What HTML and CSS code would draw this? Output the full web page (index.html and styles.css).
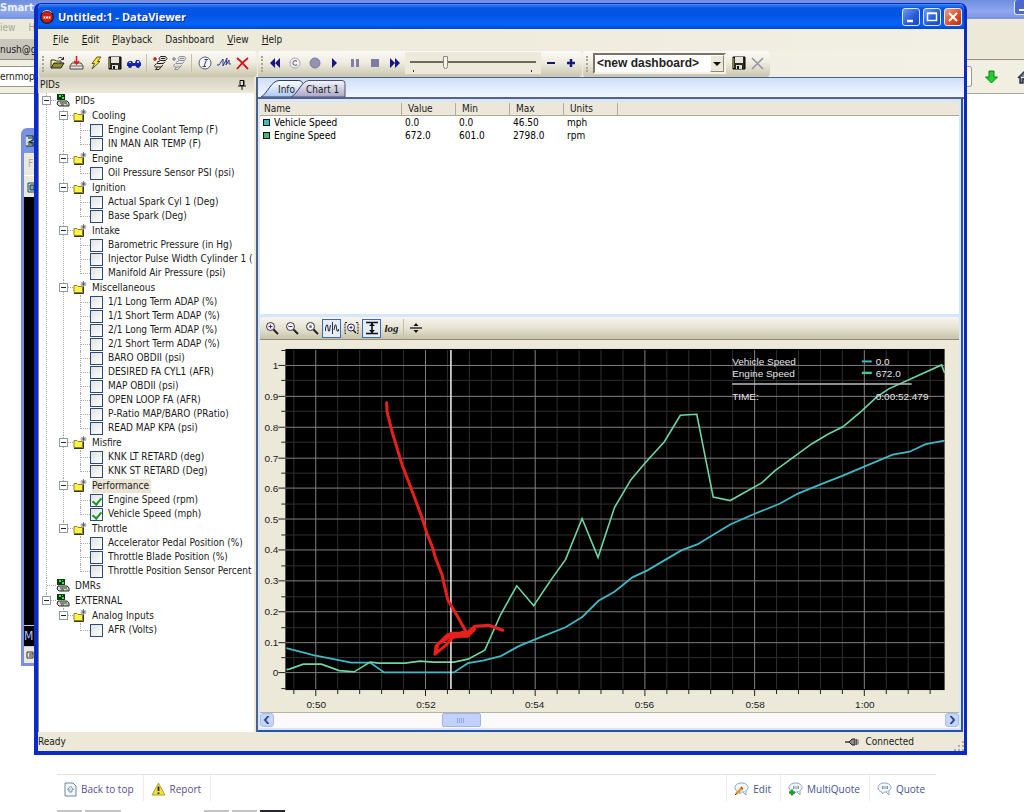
FILE: index.html
```html
<!DOCTYPE html>
<html lang="en">
<head>
<meta charset="utf-8">
<title>Untitled:1 - DataViewer</title>
<link rel="stylesheet" href="styles.css">
</head>
<body>
<svg class="defs" aria-hidden="true">
  <symbol id="i-device" viewBox="0 0 14 13"><path d="M1 0h8v6H1z" fill="#0b3d12"/><path d="M3 1h2v2H3zM6 3h2v2H6zM6 1h1v1H6z" fill="#3fe05a"/><path d="M2 7h9l2 2v3H3L1 10z" fill="#d9d9cf" stroke="#222"/><path d="M4 9h7M5 11h3" stroke="#333"/><path d="M10 11h2" stroke="#1ca52e"/></symbol>
  <symbol id="i-folder" viewBox="0 0 14 13"><path d="M1 4.500h3l1 1h4.500v6H1z" fill="#fff04a" stroke="#8a8420"/><path d="M1 12.500h9.500V6" fill="none" stroke="#333"/><path d="M10.500 0v6M7.500 3h6M8.500 1l4 4M12.500 1l-4 4" stroke="#444" stroke-width=".7"/></symbol>
  <symbol id="i-save" viewBox="0 0 14 14"><path d="M1 1h12v12H1z" fill="#2b2b22" stroke="#000"/><path d="M3 1h8v6H3z" fill="#e6e6dc"/><path d="M1.500 2v10" stroke="#85853a"/><path d="M4 9h6v4H4z" fill="#ddd"/><path d="M5 10h2v3H5z" fill="#111"/></symbol>
  <symbol id="i-link" viewBox="0 0 16 16"><path d="M8.500 1.500h5l1.500 2-1.500 2h-5l-1.500-2zM8 5.500l-3 2M5 8.500h6.500l1.500-2M4.500 8.500l-2 2 1 1.500H9l2-2M5.500 12l-2 2.500H7L9 12" fill="#e4e1d0" stroke="currentColor"/><path d="M9 3.500h4" stroke="currentColor"/><path d="M1 4h4M3 2v4" stroke="var(--mark)" stroke-width="1.500"/></symbol>
  <symbol id="i-lens" viewBox="0 0 14 14"><circle cx="5.500" cy="5.500" r="4" fill="#f5f2fb" stroke="#333"/><path d="M8.500 8.500l4.500 4.500" stroke="#222" stroke-width="2"/></symbol>
  <symbol id="i-bubble" viewBox="0 0 15 14"><path d="M7.500 1C3.500 1 1 3 1 5.500S3 10 5 10l.5 2 2-2c4 0 6.500-2 6.500-4.500S11.500 1 7.500 1z" fill="#f1f6fb" stroke="#8ca6c0"/><path d="M9 10l3 3v-4" fill="#f1f6fb" stroke="#8ca6c0"/></symbol>
</svg>

<div class="desktop">
  <div class="browser">
    <header class="br-title"><span>Smart</span><button class="br-min" aria-label="Minimize browser"></button></header>
    <div class="br-menu"><span>iew</span><span>H</span></div>
    <div class="br-tabs">nush@gr</div>
    <div class="br-nav">
      <div class="br-url">ernmopa</div>
      <button class="plain" aria-label="Downloads"><svg width="13" height="14" viewBox="0 0 13 14"><path d="M4 1h5v6h3.500L6.500 13 .5 7H4z" fill="#1fd12c" stroke="#137a1d"/></svg></button>
      <button class="plain" aria-label="Home"><svg width="14" height="14" viewBox="0 0 14 14"><path d="M1 8l6-6 6 6M3 7v6h3V9h2v4h3V7" fill="#7d8798" stroke="#2b3446" stroke-width="1.500"/></svg></button>
    </div>
    <main class="forum">
      <nav class="post-controls">
        <a href="#top"><svg width="13" height="15" viewBox="0 0 13 15"><path d="M1 1h8l3 3v10H1z" fill="#f4f8fb" stroke="#6d8796"/><path d="M6.500 4L3.500 7.500h1.500V10h3V7.500h1.500z" fill="#dce8ee" stroke="#6d8796" stroke-width=".8"/></svg>Back to top</a>
        <a href="#report"><svg width="15" height="14" viewBox="0 0 15 14"><path d="M7.500 1l6.500 12H1z" fill="#f3df3b" stroke="#b3a02a"/><path d="M7.500 4.500v4.500M7.500 10.500v1.500" stroke="#222" stroke-width="1.800"/></svg>Report</a>
        <a class="push" href="#edit"><svg width="15" height="14" viewBox="0 0 15 14"><use href="#i-bubble"/><path d="M2 12l6-6" stroke="#d9a02c" stroke-width="2.500"/><path d="M7.500 6.500l1-1" stroke="#c8343c" stroke-width="2.500"/><path d="M1 13l1.500-1.500" stroke="#222"/></svg>Edit</a>
        <a href="#multi"><svg width="15" height="14" viewBox="0 0 15 14"><use href="#i-bubble"/><path d="M5.500 4v3M7 4v3M9 4v3M10.500 4v3" stroke="#6a8298" stroke-width=".8"/><path d="M4 7.500v6M1 10.500h6" stroke="#1e9b2c" stroke-width="2.500"/></svg>MultiQuote</a>
        <a href="#quote"><svg width="15" height="14" viewBox="0 0 15 14"><use href="#i-bubble"/><path d="M5.500 4v3M7 4v3M9 4v3M10.500 4v3" stroke="#6a8298" stroke-width=".8"/></svg>Quote</a>
      </nav>
      <div class="thumbs"><i></i><i class="wide"></i><i class="after"></i><i></i><i class="dark"></i></div>
    </main>
  </div>

  <section class="back-window" aria-label="Background window">
    <div class="bw-title"><svg width="10" height="12" viewBox="0 0 10 12"><path d="M1 1h7v4l-4 2 4 1v3H1M3 3h4M3 9h4" fill="#cfe6d0" stroke="#123" stroke-width="1.200"/></svg></div>
    <div class="bw-menu">F</div>
    <div class="bw-tools"><svg width="10" height="12" viewBox="0 0 10 12"><path d="M1 2h8v9H1z" fill="#d8ecf4" stroke="#1b3d55"/><path d="M3 4h4v5H3z" fill="#7ab" stroke="#134"/></svg></div>
    <div class="bw-screen"></div>
    <div class="bw-mark">M</div>
    <div class="bw-foot"><svg width="10" height="10" viewBox="0 0 10 10"><path d="M2 2h6v6H2zM4 4h4M4 6h3" fill="none" stroke="#333"/></svg></div>
  </section>

  <section class="window" aria-label="DataViewer">
    <header class="titlebar">
      <svg width="14" height="14" viewBox="0 0 14 14"><circle cx="7" cy="7" r="6.200" fill="#c8201c" stroke="#2b1a22" stroke-width="1.400"/><path d="M2.500 2.500a6 6 0 0 1 9 0" stroke="#e8d8c8" fill="none"/><path d="M3 6h8v3H3z" fill="#f4604c"/><path d="M4 7.500h1M6 7.500h2M9 7.500h1" stroke="#fff" stroke-width="1.500"/></svg>
      <h1>Untitled:1 - DataViewer</h1>
      <button class="cap" aria-label="Minimize"><svg width="16" height="16" viewBox="0 0 16 16"><path d="M4 12h6" stroke="#fff" stroke-width="2.500"/></svg></button>
      <button class="cap" aria-label="Maximize"><svg width="16" height="16" viewBox="0 0 16 16"><path d="M3.500 4.500h9v7h-9zM3 4h10" fill="none" stroke="#fff" stroke-width="1.500"/></svg></button>
      <button class="cap close" aria-label="Close"><svg width="16" height="16" viewBox="0 0 16 16"><path d="M4 4l8 8M12 4l-8 8" stroke="#fff" stroke-width="2"/></svg></button>
    </header>

    <nav class="menubar">
      <button><u>F</u>ile</button><button><u>E</u>dit</button><button><u>P</u>layback</button><button>Dashboard</button><button><u>V</u>iew</button><button><u>H</u>elp</button>
    </nav>

    <div class="toolbars">
      <div class="toolbar main-tools">
        <button aria-label="Open"><svg width="15" height="14" viewBox="0 0 15 14"><path d="M1 12V4h4l1 1h5v3" fill="#f2ef9c" stroke="#333"/><path d="M1 12l3-5h10l-3 5z" fill="#8f8c34" stroke="#222"/><path d="M8 2.500c2-2 4-1 5 .5M13.500 1v2.500H11" fill="none" stroke="#222"/></svg></button>
        <button aria-label="Download"><svg width="15" height="14" viewBox="0 0 15 14"><path d="M3 7h9l2 3v3H1v-3z" fill="#eceae0" stroke="#444"/><path d="M1 10h13" stroke="#666"/><path d="M7.500 0v7M5 5l2.500 3L10 5" fill="none" stroke="#d4201e" stroke-width="1.600"/></svg></button>
        <button aria-label="Connect"><svg width="12" height="14" viewBox="0 0 12 14"><path d="M7 1h4L7.500 5.500H10L2 13l2.500-5.500H2z" fill="#f7e52e" stroke="#4d4a18" stroke-width=".9"/></svg></button>
        <button aria-label="Save"><svg width="14" height="14"><use href="#i-save"/></svg></button>
        <button aria-label="Vehicle"><svg width="16" height="14" viewBox="0 0 16 14"><path d="M1 7l2-2h3l1 2h2l1-3h3l2 3v3H1z" fill="#1828b0"/><circle cx="4" cy="10" r="2" fill="#1020a0"/><circle cx="12" cy="10" r="2" fill="#1020a0"/><path d="M11 5h2v2h-2zM3 6h2v1H3z" fill="#c8d4f8"/></svg></button>
        <hr>
        <button class="live" aria-label="Start logging"><svg width="16" height="16"><use href="#i-link"/></svg></button>
        <button class="idle" aria-label="Stop logging"><svg width="16" height="16"><use href="#i-link"/></svg></button>
        <hr>
        <button aria-label="Information"><svg width="14" height="14" viewBox="0 0 14 14"><circle cx="7" cy="7" r="6" fill="#f6f5ee" stroke="#555b7c"/><path d="M8.500 3.500L6 10.500M6.500 3.500h3.500M4.500 10.500H8" stroke="#3b4080"/></svg></button>
        <button aria-label="Signal"><svg width="14" height="14" viewBox="0 0 14 14"><path d="M0 9h2l4-6v7l4-8-1 7 3-5v4h2" fill="none" stroke="#2d3590"/></svg></button>
        <button aria-label="Delete"><svg width="13" height="13" viewBox="0 0 13 13"><path d="M1 1c4 3 7 7 11 11M12 1C8 4 4 8 1 12" stroke="#d0181c" stroke-width="1.900"/></svg></button>
      </div>
      <div class="toolbar play-tools">
        <button aria-label="Rewind"><svg width="12" height="12" viewBox="0 0 12 12"><path d="M6 1v10L1 6zM11 1v10L6 6z" fill="#171780"/></svg></button>
        <button aria-label="Continuous"><svg width="12" height="12" viewBox="0 0 12 12"><circle cx="6" cy="6" r="5" fill="#f4f3ec" stroke="#a5a5b8"/><path d="M8 4.500a2.300 2.300 0 1 0 0 3" fill="none" stroke="#74749c" stroke-width="1.200"/></svg></button>
        <button aria-label="Record"><svg width="12" height="12" viewBox="0 0 12 12"><circle cx="6" cy="6" r="5" fill="#9292b4" stroke="#7d7d9c"/></svg></button>
        <button aria-label="Play"><svg width="12" height="12" viewBox="0 0 12 12"><path d="M3 1v10l5-5z" fill="#171780"/></svg></button>
        <button aria-label="Pause"><svg width="12" height="12" viewBox="0 0 12 12"><path d="M2 2h3v8H2zM7 2h3v8H7z" fill="#8080a8"/></svg></button>
        <button aria-label="Stop"><svg width="12" height="12" viewBox="0 0 12 12"><path d="M2 2h8v8H2z" fill="#7c7ca4"/></svg></button>
        <button aria-label="Fast forward"><svg width="12" height="12" viewBox="0 0 12 12"><path d="M1 1v10l5-5zM6 1v10l5-5z" fill="#171780"/></svg></button>
        <div class="speed"><input type="range" min="0" max="100" value="27" aria-label="Playback speed"></div>
        <button aria-label="Slower"><svg width="12" height="12" viewBox="0 0 12 12"><path d="M2 6h8" stroke="#171760" stroke-width="2.200"/></svg></button>
        <button aria-label="Faster"><svg width="12" height="12" viewBox="0 0 12 12"><path d="M2 6h8M6 2v8" stroke="#171780" stroke-width="2.500"/></svg></button>
      </div>
      <div class="toolbar dash-tools">
        <div class="combo"><select aria-label="Dashboard"><option>&lt;new dashboard&gt;</option></select><span></span></div>
        <button aria-label="Save dashboard"><svg width="14" height="14"><use href="#i-save"/></svg></button>
        <button aria-label="Delete dashboard"><svg width="13" height="13" viewBox="0 0 13 13"><path d="M1 1l11 11M12 1L1 12" stroke="#8f93a6" stroke-width="1.500"/></svg></button>
      </div>
    </div>

    <div class="work">
      <aside class="sidebar">
        <div class="side-head"><h2>PIDs</h2><button class="plain" aria-label="Pin"><svg width="8" height="10" viewBox="0 0 8 10"><path d="M2 .5h4v5H2zM0 6h8M4 6v4M5.500 1v4" fill="none" stroke="#111"/></svg></button></div>
        <ul class="tree">
          <li><div class="row head"><button class="exp" aria-label="Collapse PIDs"></button><svg width="14" height="13"><use href="#i-device"/></svg><span>PIDs</span></div>
            <ul>
              <li><div class="row head"><button class="exp" aria-label="Collapse Cooling"></button><svg width="14" height="13"><use href="#i-folder"/></svg><span>Cooling</span></div>
                <ul>
                  <li><label class="row"><input type="checkbox"><span>Engine Coolant Temp (F)</span></label></li>
                  <li><label class="row"><input type="checkbox"><span>IN MAN AIR TEMP (F)</span></label></li>
                </ul></li>
              <li><div class="row head"><button class="exp" aria-label="Collapse Engine"></button><svg width="14" height="13"><use href="#i-folder"/></svg><span>Engine</span></div>
                <ul>
                  <li><label class="row"><input type="checkbox"><span>Oil Pressure Sensor PSI (psi)</span></label></li>
                </ul></li>
              <li><div class="row head"><button class="exp" aria-label="Collapse Ignition"></button><svg width="14" height="13"><use href="#i-folder"/></svg><span>Ignition</span></div>
                <ul>
                  <li><label class="row"><input type="checkbox"><span>Actual Spark Cyl 1 (Deg)</span></label></li>
                  <li><label class="row"><input type="checkbox"><span>Base Spark (Deg)</span></label></li>
                </ul></li>
              <li><div class="row head"><button class="exp" aria-label="Collapse Intake"></button><svg width="14" height="13"><use href="#i-folder"/></svg><span>Intake</span></div>
                <ul>
                  <li><label class="row"><input type="checkbox"><span>Barometric Pressure (in Hg)</span></label></li>
                  <li><label class="row"><input type="checkbox"><span>Injector Pulse Width Cylinder 1 (</span></label></li>
                  <li><label class="row"><input type="checkbox"><span>Manifold Air Pressure (psi)</span></label></li>
                </ul></li>
              <li><div class="row head"><button class="exp" aria-label="Collapse Miscellaneous"></button><svg width="14" height="13"><use href="#i-folder"/></svg><span>Miscellaneous</span></div>
                <ul>
                  <li><label class="row"><input type="checkbox"><span>1/1 Long Term ADAP (%)</span></label></li>
                  <li><label class="row"><input type="checkbox"><span>1/1 Short Term ADAP (%)</span></label></li>
                  <li><label class="row"><input type="checkbox"><span>2/1 Long Term ADAP (%)</span></label></li>
                  <li><label class="row"><input type="checkbox"><span>2/1 Short Term ADAP (%)</span></label></li>
                  <li><label class="row"><input type="checkbox"><span>BARO OBDII (psi)</span></label></li>
                  <li><label class="row"><input type="checkbox"><span>DESIRED FA CYL1 (AFR)</span></label></li>
                  <li><label class="row"><input type="checkbox"><span>MAP OBDII (psi)</span></label></li>
                  <li><label class="row"><input type="checkbox"><span>OPEN LOOP FA (AFR)</span></label></li>
                  <li><label class="row"><input type="checkbox"><span>P-Ratio MAP/BARO (PRatio)</span></label></li>
                  <li><label class="row"><input type="checkbox"><span>READ MAP KPA (psi)</span></label></li>
                </ul></li>
              <li><div class="row head"><button class="exp" aria-label="Collapse Misfire"></button><svg width="14" height="13"><use href="#i-folder"/></svg><span>Misfire</span></div>
                <ul>
                  <li><label class="row"><input type="checkbox"><span>KNK LT RETARD (deg)</span></label></li>
                  <li><label class="row"><input type="checkbox"><span>KNK ST RETARD (Deg)</span></label></li>
                </ul></li>
              <li><div class="row head"><button class="exp" aria-label="Collapse Performance"></button><svg width="14" height="13"><use href="#i-folder"/></svg><span class="selected">Performance</span></div>
                <ul>
                  <li><label class="row"><input type="checkbox" checked><span>Engine Speed (rpm)</span></label></li>
                  <li><label class="row"><input type="checkbox" checked><span>Vehicle Speed (mph)</span></label></li>
                </ul></li>
              <li><div class="row head"><button class="exp" aria-label="Collapse Throttle"></button><svg width="14" height="13"><use href="#i-folder"/></svg><span>Throttle</span></div>
                <ul>
                  <li><label class="row"><input type="checkbox"><span>Accelerator Pedal Position (%)</span></label></li>
                  <li><label class="row"><input type="checkbox"><span>Throttle Blade Position (%)</span></label></li>
                  <li><label class="row"><input type="checkbox"><span>Throttle Position Sensor Percent</span></label></li>
                </ul></li>
            </ul></li>
          <li><div class="row head none"><svg width="14" height="13"><use href="#i-device"/></svg><span>DMRs</span></div></li>
          <li><div class="row head"><button class="exp" aria-label="Collapse EXTERNAL"></button><svg width="14" height="13"><use href="#i-device"/></svg><span>EXTERNAL</span></div>
            <ul>
              <li><div class="row head"><button class="exp" aria-label="Collapse Analog Inputs"></button><svg width="14" height="13"><use href="#i-folder"/></svg><span>Analog Inputs</span></div>
                <ul>
                  <li><label class="row"><input type="checkbox"><span>AFR (Volts)</span></label></li>
                </ul></li>
            </ul></li>
        </ul>
      </aside>

      <section class="document">
        <div class="tabs">
          <svg width="90" height="19" viewBox="0 0 90 19" aria-hidden="true">
            <defs><linearGradient id="g1" x2="0" y2="1"><stop stop-color="#fff"/><stop offset="1" stop-color="#a9c8f2"/></linearGradient><linearGradient id="g2" x2="0" y2="1"><stop stop-color="#f6f5fc"/><stop offset="1" stop-color="#aaa6c6"/></linearGradient></defs>
            <path d="M2 19C8 16 12 3 20 2.500h20q3 0 4 3L34 19z" fill="url(#g1)" stroke="#2b3f6b"/>
            <path d="M32 19C40 15 42 3 50 2.500h33q3 0 3 3V19z" fill="url(#g2)" stroke="#4b4f74"/>
          </svg>
          <button>Info</button><button>Chart 1</button>
        </div>
        <div class="panel">
          <div class="list">
            <table>
              <colgroup><col class="c-name"><col class="c-num"><col class="c-num"><col class="c-num"><col class="c-num"><col></colgroup>
              <thead><tr><th>Name</th><th>Value</th><th>Min</th><th>Max</th><th>Units</th><th></th></tr></thead>
              <tbody>
                <tr><td><i class="key blue"></i>Vehicle Speed</td><td>0.0</td><td>0.0</td><td>46.50</td><td>mph</td><td></td></tr>
                <tr><td><i class="key green"></i>Engine Speed</td><td>672.0</td><td>601.0</td><td>2798.0</td><td>rpm</td><td></td></tr>
              </tbody>
            </table>
          </div>
          <div class="chart-tools">
            <button aria-label="Zoom in"><svg width="14" height="14" viewBox="0 0 14 14"><use href="#i-lens"/><path d="M3.500 5.500h4M5.500 3.500v4" stroke="#5a1c8c"/></svg></button>
            <button aria-label="Zoom out"><svg width="14" height="14" viewBox="0 0 14 14"><use href="#i-lens"/><path d="M3.500 5.500h4" stroke="#5a1c8c"/></svg></button>
            <button aria-label="Zoom reset"><svg width="14" height="14" viewBox="0 0 14 14"><use href="#i-lens"/><circle cx="5.500" cy="5.500" r="1.500" fill="#777"/></svg></button>
            <button class="on" aria-label="Cursor"><svg width="14" height="14" viewBox="0 0 14 14"><path d="M.5 10V7l1-3h1l1 6h1l1-6M7.500 1v12M9 9l1-5h1l1 6h1.500V8" fill="none" stroke="#2a3048"/></svg></button>
            <button aria-label="Zoom window"><svg width="15" height="14" viewBox="0 0 15 14"><path d="M3 1.500H1v11h2M12 1.500h2v11h-2" fill="none" stroke="#222" stroke-dasharray="2 1"/><circle cx="7" cy="6.500" r="3.500" fill="#fff" stroke="#2c2360"/><path d="M5.500 6.500h3M7 5v3" stroke="#5a1c8c"/><path d="M9 9l3 3" stroke="#222" stroke-width="1.500"/></svg></button>
            <button class="on" aria-label="Auto scale"><svg width="14" height="14" viewBox="0 0 14 14"><path d="M1 1.500h12M1 12.500h12M7 2v10" stroke="#111" stroke-width="1.600"/><path d="M4 5l3-3 3 3zM4 9l3 3 3-3z" fill="#111"/></svg></button>
            <button class="log">log</button>
            <hr>
            <button aria-label="Split"><svg width="12" height="12" viewBox="0 0 12 12"><path d="M0 6h12" stroke="#111" stroke-width="1.300"/><path d="M3.500 4L6 1l2.500 3zM3.500 8L6 11l2.500-3z" fill="#111"/></svg></button>
          </div>
          <div class="chart">
            <svg viewBox="260 340 698 373" role="img" aria-label="Vehicle speed and engine speed over time">
              <rect x="284" y="349" width="661" height="342" fill="#000"/>
              <g fill="none">
                <path stroke="#303030" d="M292.500 350v340M336.500 350v340M358.500 350v340M380.500 350v340M402.500 350v340M446.500 350v340M468.500 350v340M490.500 350v340M512.500 350v340M556.500 350v340M578.500 350v340M600.500 350v340M622.500 350v340M666.500 350v340M688.500 350v340M710.500 350v340M732.500 350v340M776.500 350v340M798.500 350v340M820.500 350v340M842.500 350v340M886.500 350v340M908.500 350v340M930.500 350v340M284 380.500h661M284 411.500h661M284 442.500h661M284 473.500h661M284 504.500h661M284 535.500h661M284 566.500h661M284 597.500h661M284 628.500h661M284 658.500h661"/>
                <path stroke="#828282" d="M314.500 350v340M424.500 350v340M534.500 350v340M644.500 350v340M754.500 350v340M864.500 350v340M284 365.500h661M284 396.500h661M284 427.500h661M284 458.500h661M284 488.500h661M284 519.500h661M284 550.500h661M284 581.500h661M284 612.500h661M284 643.500h661M284 673.500h661"/>
                <path stroke="#222" d="M277 365.500h7M277 396.500h7M277 427.500h7M277 458.500h7M277 488.500h7M277 519.500h7M277 550.500h7M277 581.500h7M277 612.500h7M277 643.500h7M277 673.500h7M280 350.500h4M280 380.500h4M280 411.500h4M280 442.500h4M280 473.500h4M280 504.500h4M280 535.500h4M280 566.500h4M280 597.500h4M280 628.500h4M280 658.500h4M280 689.500h4M314.500 691v6M424.500 691v6M534.500 691v6M644.500 691v6M754.500 691v6M864.500 691v6M292.500 691v4M336.500 691v4M358.500 691v4M380.500 691v4M402.500 691v4M446.500 691v4M468.500 691v4M490.500 691v4M512.500 691v4M556.500 691v4M578.500 691v4M600.500 691v4M622.500 691v4M666.500 691v4M688.500 691v4M710.500 691v4M732.500 691v4M776.500 691v4M798.500 691v4M820.500 691v4M842.500 691v4M886.500 691v4M908.500 691v4M930.500 691v4"/>
                <path stroke="#3fb9c4" stroke-width="1.800" d="M285 649L312 656L350 663.500H369L383 673.300H453L467 664L482 661.500L500 657L518 647L540 638L565 628L582 617.500L598 601.500L614 592.500L632 578L647 571L681 551L697 545L730 525L754 514.500L780 504L798 494L820 485L843 476L862 468L893 455L910 452L926 444.500L945 441"/>
                <path stroke="#6fd6a4" stroke-width="1.600" d="M285 670.500L288 670L302 665H320L338 671.500L353 672.700L369 663L378 664H404L419 662L432 663H453L467 660L484 651L500 615L516 586.500L533 606.500L550 581L565 560L581.500 519L597.500 558L614 508L630.500 480L644 464L664 442L680 415.500L696.500 414.500L713 497.500L730 501L762 483L775 471L812 444L828 434.500L843 427L862 411L877 397L889 389L942 365L945 373"/>
                <path stroke="#f2f2f2" stroke-width="1.500" d="M450 350V690"/>
                <path stroke="#bdbdbd" stroke-width="1.500" d="M732 384H912"/>
                <path stroke="#3fb9c4" stroke-width="2" d="M862 361.500h10"/>
                <path stroke="#4fc48e" stroke-width="2.500" d="M862 373h10"/>
                <path stroke="#e8201c" stroke-width="3" stroke-linecap="round" stroke-linejoin="round" d="M385.500 403L386 412L391 432L401 465L412 494L421 518L426 534L432 549L434 557L441 575L443 584L447 601L456 616L461 625L466 634M434 655L435 647L446 636L451 634L466 634L474 627L488 626L502 631M434 655L445 646L452 638L460 637L467 637L474 630M435 653L437 645L450 637L462 633"/>
              </g>
              <g class="legend"><text x="732" y="365">Vehicle Speed</text><text x="732" y="377">Engine Speed</text><text x="732" y="400">TIME:</text><text x="876" y="365">0.0</text><text x="876" y="377">672.0</text><text x="876" y="400">0:00:52.479</text></g>
              <g class="axis end"><text x="277" y="369">1</text><text x="277" y="400">0.9</text><text x="277" y="431">0.8</text><text x="277" y="462">0.7</text><text x="277" y="492">0.6</text><text x="277" y="523">0.5</text><text x="277" y="554">0.4</text><text x="277" y="585">0.3</text><text x="277" y="616">0.2</text><text x="277" y="647">0.1</text><text x="277" y="677">0</text></g>
              <g class="axis mid"><text x="315" y="709">0:50</text><text x="425" y="709">0:52</text><text x="534" y="709">0:54</text><text x="644" y="709">0:56</text><text x="755" y="709">0:58</text><text x="865" y="709">1:00</text></g>
            </svg>
          </div>
          <div class="scroll">
            <button aria-label="Scroll left"><svg width="8" height="8" viewBox="0 0 8 8"><path d="M5.500 0L2 4l3.500 4" fill="none" stroke="#1f3f86" stroke-width="1.800"/></svg></button>
            <div class="track"><div class="thumb"></div></div>
            <button aria-label="Scroll right"><svg width="8" height="8" viewBox="0 0 8 8"><path d="M2.500 0L6 4 2.500 8" fill="none" stroke="#1f3f86" stroke-width="1.800"/></svg></button>
          </div>
        </div>
      </section>
    </div>

    <footer class="status">
      <span>Ready</span>
      <span class="conn"><svg width="14" height="8" viewBox="0 0 14 8"><path d="M0 4h5" stroke="#222" stroke-width="1.300"/><path d="M4 4l3-3h3v6H7z" fill="#888" stroke="#222"/><path d="M11.500 1v6M13 1.500v5" stroke="#555"/></svg>Connected</span>
      <svg class="sizer" width="10" height="10" viewBox="0 0 10 10"><path d="M8 0h2v2H8zM4 4h2v2H4zM8 4h2v2H8zM0 8h2v2H0zM4 8h2v2H4zM8 8h2v2H8z" fill="#b0ad9c"/></svg>
    </footer>
  </section>
</div>
</body>
</html>
```
FILE: styles.css
```css
* { box-sizing: border-box; }
body { margin: 0; font-family: "DejaVu Sans Condensed", "DejaVu Sans", sans-serif; font-size: 10px; line-height: 14px; color: #1a1a1a; background: #fff; }
button, input, select { font: inherit; color: inherit; margin: 0; }
button { border: 0; padding: 0; background: none; display: inline-flex; align-items: center; justify-content: center; }
ul { list-style: none; margin: 0; padding: 0; }
h1, h2 { margin: 0; font-size: inherit; font-weight: normal; }
svg { flex: none; display: block; }
.defs { position: absolute; width: 0; height: 0; }
.desktop { position: relative; height: 100vh; overflow: hidden; }

/* Browser behind the application */
.browser { height: 100%; display: flex; flex-direction: column; }
.br-title { height: 19px; display: flex; justify-content: space-between; background: linear-gradient(#6f8edf, #8fa7ee 60%, #7793e2); color: #eef2ff; font-weight: bold; font-size: 11px; line-height: 16px; overflow: hidden; }
.br-min { width: 16px; height: 15px; margin-right: -6px; border: 1px solid #dfe6fb; border-radius: 3px; background: linear-gradient(#fff, #fff) 4px 9px / 6px 2px no-repeat #4a68d0; border-top: 0; }
.br-menu { height: 20px; display: flex; gap: 13px; background: #ece9d8; color: #a9a69a; line-height: 18px; }
.br-tabs { height: 21px; background: linear-gradient(90deg, #c9c7bd 120px, #ece9d8 120px); border-bottom: 1px solid #8e8c80; line-height: 21px; }
.br-nav { height: 34px; display: flex; align-items: center; background: #f1eee2; border-bottom: 1px solid #aca899; }
.br-url { flex: 1; height: 21px; background: #fff; border: 1px solid #9a988c; border-left: 0; border-radius: 0 3px 3px 0; line-height: 19px; margin-right: 13px; }
.br-nav .plain + .plain { margin-left: 19px; margin-right: -7px; }
.forum { flex: 1; display: flex; flex-direction: column; justify-content: flex-end; padding: 0 88px 0 57px; font-family: "Open Sans", sans-serif; }
.post-controls { display: flex; height: 27px; border-top: 1px solid #e3e3e3; margin-bottom: 9px; }
.post-controls a { display: flex; align-items: center; gap: 4px; padding: 2px 9px 0 7px; border-right: 1px solid #ececec; color: #44538c; font-size: 10px; text-decoration: none; }
.post-controls a:nth-child(-n+2) { color: #5c4c94; }
.post-controls .push { margin-left: auto; border-left: 1px solid #ececec; }
.post-controls a:last-child { border-right: 0; padding-right: 11px; }
.thumbs { display: flex; gap: 3px; height: 2px; }
.thumbs i { width: 25px; background: #c4c4c4; }
.thumbs .wide { width: 36px; }
.thumbs .after { margin-left: 80px; }
.thumbs .dark { background: #26262c; }

/* Window hidden behind the main one */
.back-window { position: absolute; left: 21px; top: 128px; width: 40px; bottom: 146px; display: flex; flex-direction: column; border: 3px solid #7a8ee2; border-radius: 6px 0 0 0; background: #ece9d8; }
.bw-title { height: 22px; padding: 4px 1px; background: #7a94e4; }
.bw-menu { height: 22px; color: #aaa; padding: 4px; }
.bw-tools { height: 22px; padding: 5px 3px; border-top: 1px solid #fff; }
.bw-screen { flex: 1; background: #000; }
.bw-mark { height: 22px; border: solid #b8c8f8; border-width: 1px 0; background: #000; color: #b8c8f8; font-size: 12px; line-height: 20px; }
.bw-foot { height: 16px; padding: 3px 1px; }

/* Main window */
.window { position: absolute; left: 34px; top: 3px; right: 57px; bottom: 57px; display: flex; flex-direction: column; border: solid #0a2cc4; border-width: 1px 4px 4px; border-right-width: 3px; border-radius: 7px 7px 0 0; background: #ece9d8; overflow: hidden; }
.titlebar { height: 25px; flex: none; display: flex; align-items: center; gap: 3px; padding: 0 2px; background: linear-gradient(#3f8cf8, #0755e2 16%, #0354e4 45%, #0564fa 80%, #0048cf); color: #fff; }
.titlebar h1 { flex: 1; padding-left: 1px; font: bold 11px/16px "Open Sans", sans-serif; text-shadow: 1px 1px #0a2a90; }
.cap { width: 18px; height: 18px; border: 1px solid #dfe8fd; border-radius: 3px; background: linear-gradient(135deg, #6f9af5, #2458da 60%, #1a48c0); }
.cap.close { background: linear-gradient(135deg, #f0a085, #de4a24 60%, #b8300f); }
.menubar { height: 22px; flex: none; display: flex; gap: 13px; padding: 0 15px; background: linear-gradient(90deg, #ece9d8, #f2efe4); }
.toolbars { height: 26px; flex: none; display: flex; align-items: stretch; background: linear-gradient(90deg, #ece9d8, #f3f0e6); }
.toolbar { display: flex; align-items: center; border-radius: 2px 4px 4px 2px; background: linear-gradient(#fbfaf6, #eeebdf 45%, #c8c5ac); padding: 0 0 2px 9px; position: relative; }
.toolbar::before { content: ""; position: absolute; left: 3px; top: 5px; bottom: 5px; border-left: 2px dotted #aaa792; }
.toolbar button { width: 19px; height: 22px; }
hr { width: 1px; height: 18px; margin: 0 3px; border: 0; background: #c3c0ae; }
.main-tools { width: 218px; margin-left: 1px; }
.live { color: #222; --mark: #c41e1e; }
.idle { color: #8e90a6; --mark: #8e90a6; }
.play-tools { width: 324px; margin-left: 1px; padding-left: 7px; }
.play-tools button { width: 20px; }
.speed { width: 136px; height: 22px; padding: 0 5px; background: #edeadc; background-image: linear-gradient(#333, #333), linear-gradient(#333, #333); background-size: 1px 2px; background-position: 8px 18px, 126px 18px; background-repeat: no-repeat; }
.speed input { appearance: none; width: 100%; height: 20px; background: linear-gradient(#6c6a5e, #6c6a5e) center / 100% 2px no-repeat; display: block; }
.speed input::-webkit-slider-thumb { appearance: none; width: 5px; height: 13px; background: #f5f3ea; border: 1px solid #8a887c; border-radius: 0 0 3px 3px; }
.dash-tools { width: 187px; margin-left: 1px; padding-left: 10px; }
.combo { flex: none; width: 133px; height: 21px; display: flex; position: relative; border: 2px solid; border-color: #77756a #f3f1e8 #f3f1e8 #77756a; background: #fff; margin-right: 3px; }
.combo select { appearance: none; width: 100%; border: 0; padding: 0 2px; background: none; font-family: "Liberation Sans", sans-serif; font-weight: bold; font-size: 12px; color: #222; }
.combo span { position: absolute; right: 0; top: 0; bottom: 0; width: 14px; background: #ece9d8; border: 1px solid; border-color: #fff #8a887c #8a887c #fff; pointer-events: none; }
.combo span::after { content: ""; position: absolute; left: 2px; top: 6px; border: 4px solid transparent; border-top-color: #111; }

.work { flex: 1; display: flex; min-height: 0; }

/* PID tree */
.sidebar { width: 218px; flex: none; display: flex; flex-direction: column; padding-right: 2px; background: #ece9d8; }
.side-head { height: 16px; flex: none; display: flex; align-items: center; justify-content: space-between; padding: 0 8px 0 2px; background: linear-gradient(#d5d2c2, #ece9d8); }
.tree { flex: 1; min-height: 0; overflow: hidden; background: #fff; border-left: 1px solid #8c8a7e; padding-left: 3px; margin-bottom: 1px; }
.tree ul { padding-left: 17px; }
.tree li { position: relative; }
.tree li::before { content: ""; position: absolute; left: 4px; top: 0; bottom: 0; border-left: 1px dotted #a8a8a8; }
.tree li:last-child::before { bottom: auto; height: 8px; }
.row { display: flex; align-items: center; height: 14px; padding-left: 14px; position: relative; white-space: nowrap; gap: 5px; }
.row::before { content: ""; position: absolute; left: 5px; top: 7px; width: 9px; border-top: 1px dotted #a8a8a8; }
.row.head { height: 15px; padding-left: 0; }
.row.head.none { padding-left: 14px; }
.exp { width: 9px; height: 9px; flex: none; position: relative; border: 1px solid #8f9aa8; background: linear-gradient(#222, #222) center / 5px 1px no-repeat #fff; }
.row svg { position: relative; }
.row input { appearance: none; flex: none; width: 13px; height: 13px; border: 1px solid #2c4a72; background: linear-gradient(135deg, #dfe2e2, #fff); }
.row input:checked::after { content: ""; display: block; width: 4px; height: 7px; margin: 1px 0 0 3px; border: solid #1e9428; border-width: 0 2px 2px 0; transform: rotate(40deg); }
.selected { background: #ece5d6; padding-right: 2px; }

/* Document area */
.document { flex: 1; min-width: 0; display: flex; flex-direction: column; border: solid #4a628f; border-width: 1px 0 0 2px; margin-bottom: 1px; }
.tabs { height: 21px; flex: none; position: relative; display: flex; gap: 11px; padding: 5px 0 0 20px; border-bottom: 2px solid #55628e; background: linear-gradient(#cfdffa, #f2f7ff); }
.tabs svg { position: absolute; left: 1px; top: 0; }
.tabs button { position: relative; height: 14px; }
.panel { flex: 1; min-height: 0; display: flex; flex-direction: column; margin-right: 1px; border: solid #2552ae; border-width: 0 2px 2px 0; background: #d8e6fb; padding: 3px 2px 2px; }
.list { flex: 0 0 212px; background: #fff; }
table { width: 100%; table-layout: fixed; border-collapse: separate; border-spacing: 0; }
.c-name { width: 142px; }
.c-num { width: 54px; }
th, td { text-align: left; font-weight: normal; line-height: 13px; height: 13px; }
th { height: 14px; padding: 0 6px; background: linear-gradient(90deg, transparent calc(100% - 1px), #b0ad9c 0) 0 1px no-repeat #ece7d9; border-bottom: 1px solid #aca899; }
th:first-child { padding-left: 4px; }
th:last-child { background: #ece7d9; }
td { padding: 0 2px 0 3px; color: #000; }
.key { display: inline-block; width: 7px; height: 7px; margin-right: 4px; border: 1px solid #111; }
.blue { background: #34bfc0; }
.green { background: #46b873; }
.chart-tools { height: 23px; flex: none; display: flex; align-items: center; gap: 1px; margin-top: 3px; padding-left: 2px; border-radius: 3px 3px 0 0; border-bottom: 1px solid #8e8c78; background: linear-gradient(#f7f5ee, #e6e3d3 50%, #c6c3aa); }
.chart-tools button { width: 19px; height: 19px; }
.chart-tools hr { margin: 0 1px; }
.chart-tools .on { border: 1px solid #3c68b4; background: #e6ebf4; }
.chart-tools .log { font: bold italic 11px/14px "Liberation Serif", serif; }
.chart { flex: 1; min-height: 0; background: #ece9d8; border-bottom: 1px solid #b5b2a2; }
.chart svg { width: 100%; height: 100%; }
.legend, .axis { font-family: "Liberation Sans", sans-serif; font-size: 10px; fill: #1a1a1a; }
.legend { fill: #e4e4e4; }
.end { text-anchor: end; }
.mid { text-anchor: middle; }
.scroll { height: 15px; flex: none; display: flex; background: #fbfaf8; }
.scroll button { width: 14px; height: 14px; border: 1px solid #a8bdf0; border-radius: 3px; background: #c4d4fa; }
.track { flex: 1; }
.thumb { width: 39px; height: 14px; margin-left: 25%; border: 1px solid #9fb4ec; border-radius: 2px; background: repeating-linear-gradient(90deg, #8ea8ea 0 1px, transparent 1px 2px) center / 8px 5px no-repeat #c2d1fb; }

.status { height: 18px; flex: none; display: flex; align-items: center; justify-content: space-between; background: #ece9d8; }
.conn { display: flex; align-items: center; gap: 7px; margin-left: auto; margin-right: 40px; }
.sizer { align-self: flex-end; }
```
